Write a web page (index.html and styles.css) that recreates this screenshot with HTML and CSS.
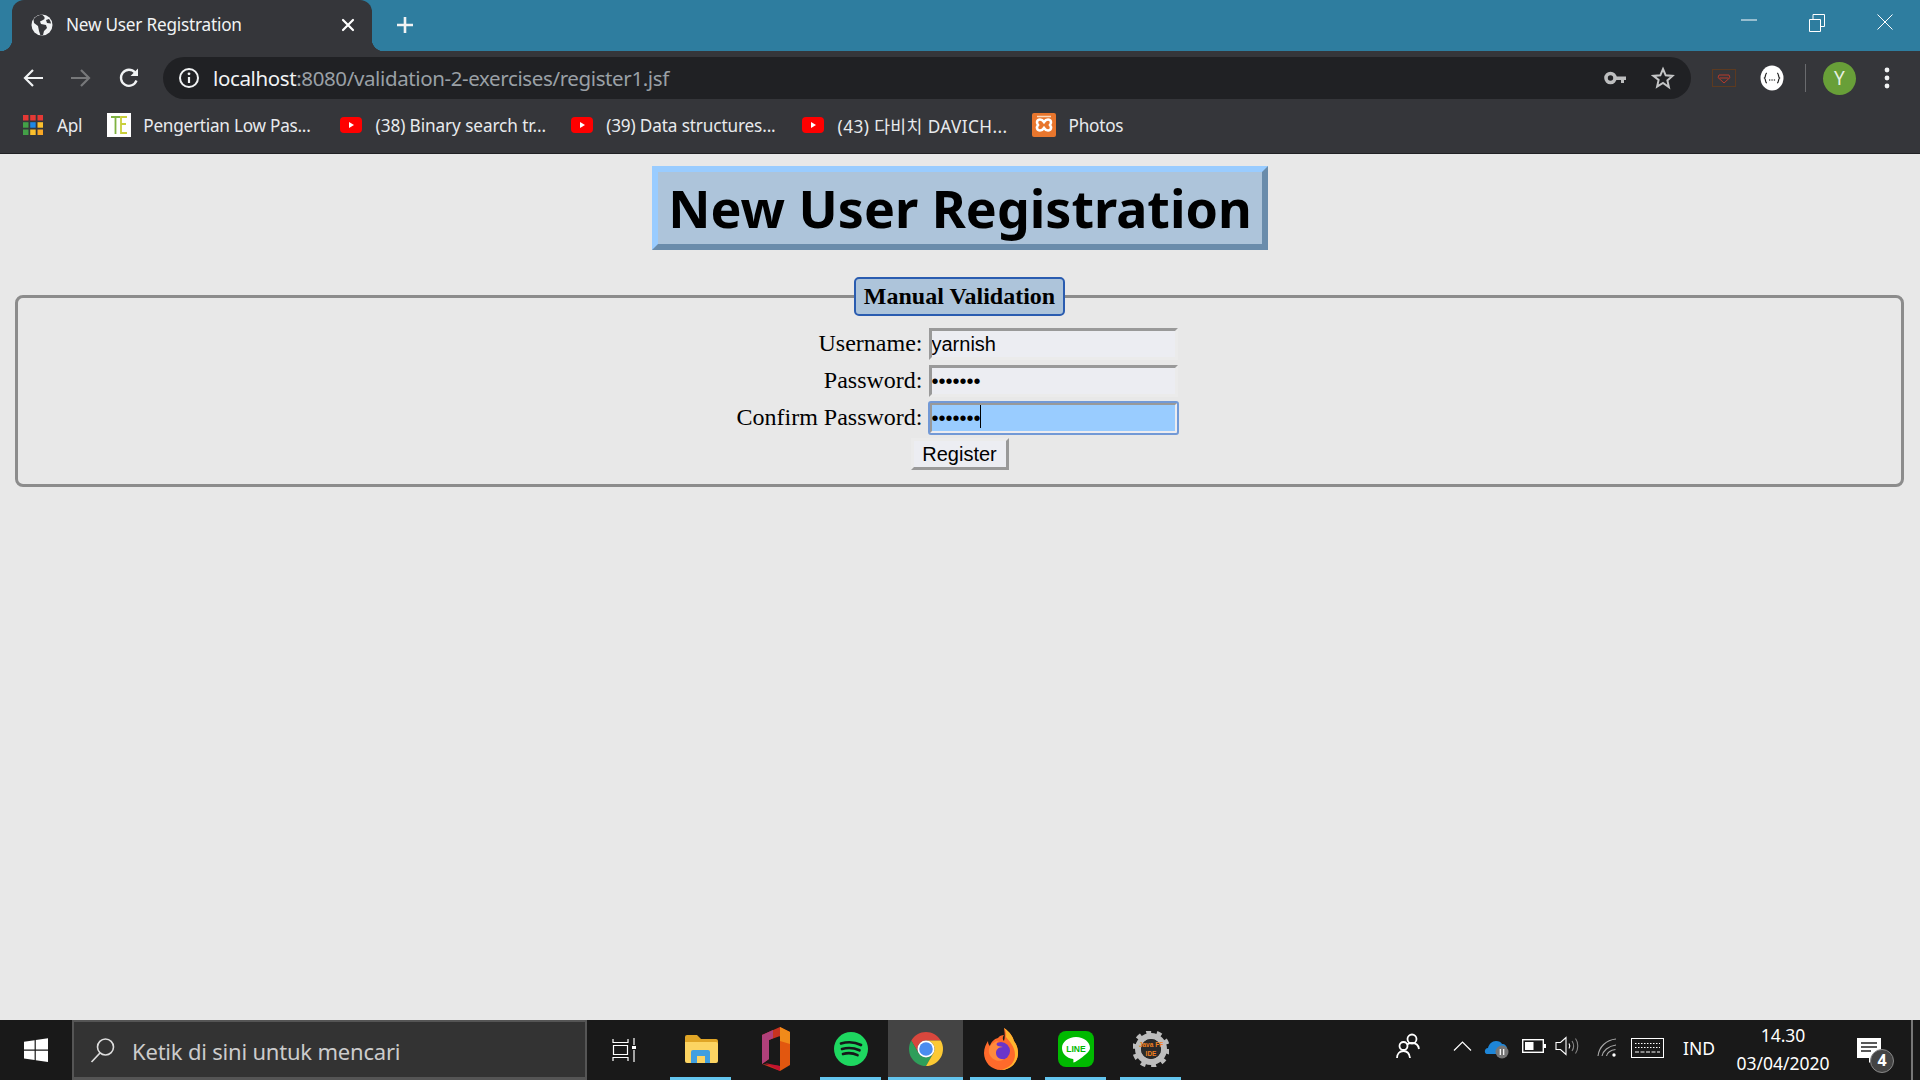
FILE: index.html
```html
<!DOCTYPE html>
<html lang="en">
<head>
<meta charset="utf-8">
<title>New User Registration</title>
<link rel="stylesheet" href="styles.css">
</head>
<body>
<header class="chrome">
  <div class="tabstrip">
    <div class="tab">
      <svg class="tab-globe" width="22" height="22" viewBox="0 0 22 22"><circle cx="11" cy="11" r="10.5" fill="#f1f3f4"/><path d="M11 .5C7 1 4 3 2.500 5.500L3 9l4 3 1 5 1.500 4.500L12 21l1-4 3-3-1-3-5-1-1-2.500L12 6l1.500-1V3L11 .5zM18 5l-3 1 1 3 4 .5c-.3-2-1-3.200-2-4.500z" fill="#35363a"/></svg>
      <span class="tab-title">New User Registration</span>
      <svg class="tab-close" width="14" height="14" viewBox="0 0 14 14"><path d="M2 2l10 10M12 2L2 12" stroke="#fff" stroke-width="2.200" stroke-linecap="round"/></svg>
    </div>
    <svg class="tab-new" width="20" height="20" viewBox="0 0 20 20"><path d="M10 2v16M2 10h16" stroke="#f1f3f4" stroke-width="2.600"/></svg>
    <div class="win-controls">
      <svg width="16" height="16" viewBox="0 0 16 16"><path d="M0 6h16" stroke="#fff" stroke-width="1"/></svg>
      <svg width="16" height="18" viewBox="0 0 16 18"><path d="M.5 5.500h11v12H.5zM4 5.500V.5h11.500v12H11.500" fill="none" stroke="#fff" stroke-width="1"/></svg>
      <svg width="16" height="16" viewBox="0 0 16 16"><path d="M.5.500l15 15M15.500.500l-15 15" stroke="#fff" stroke-width="1"/></svg>
    </div>
  </div>
  <div class="toolbar">
    <svg class="nav-icon" width="24" height="24" viewBox="0 0 24 24"><path d="M22 12H4M12 4l-8 8 8 8" fill="none" stroke="#f1f3f4" stroke-width="2.200"/></svg>
    <svg class="nav-icon" width="24" height="24" viewBox="0 0 24 24"><path d="M2 12h18M12 4l8 8-8 8" fill="none" stroke="#77787a" stroke-width="2.200"/></svg>
    <svg class="nav-icon" width="24" height="24" viewBox="0 0 24 24"><path d="M19.500 14.500A8 8 0 1 1 18 6.500" fill="none" stroke="#f1f3f4" stroke-width="2.300"/><path d="M21 2.500V10h-7.500z" fill="#f1f3f4"/></svg>
    <div class="omnibox">
      <svg class="info" width="22" height="22" viewBox="0 0 22 22"><circle cx="11" cy="11" r="9" fill="none" stroke="#f1f3f4" stroke-width="2"/><path d="M11 10v6" stroke="#f1f3f4" stroke-width="2.200"/><circle cx="11" cy="6.800" r="1.400" fill="#f1f3f4"/></svg>
      <span class="url"><span class="url-host">localhost</span>:8080/validation-2-exercises/register1.jsf</span>
      <svg class="omni-key" width="22" height="14" viewBox="0 0 22 14"><circle cx="6.500" cy="7" r="4.500" fill="none" stroke="#bdbebf" stroke-width="3.600"/><path d="M11 5.500h11v3.500h-2v3h-3V9h-6z" fill="#bdbebf"/></svg>
      <svg class="omni-star" width="24" height="24" viewBox="0 0 24 24"><path d="M12 3l2.700 6.300 6.800.6-5.100 4.500 1.500 6.700L12 17l-5.900 3.600 1.500-6.700L2.500 9.900l6.800-.6z" fill="none" stroke="#c4c5c6" stroke-width="2" stroke-linejoin="miter"/></svg>
    </div>
    <svg class="ext-red" width="24" height="18" viewBox="0 0 24 18"><rect x=".5" y=".5" width="23" height="17" fill="none" stroke="#5c3a20"/><path d="M7 6h10l1 2.500-6 5.500-6-5.500zM7.500 9h9" fill="none" stroke="#b83a2b" stroke-width="1"/></svg>
    <svg class="ext-json" width="24" height="26" viewBox="0 0 24 26"><ellipse cx="12" cy="13" rx="11.500" ry="12.500" fill="#fff"/><path d="M7 8c-2 0-1 4-2.500 5C6 14 5 18 7 18M17 8c2 0 1 4 2.500 5-1.500 1-.5 5-2.500 5" fill="none" stroke="#222" stroke-width="1.200"/><path d="M9 15h1.300M11.400 15h1.300M13.800 15h1.300" stroke="#555" stroke-width="1.300"/></svg>
    <span class="tool-sep"></span>
    <span class="avatar">Y</span>
    <svg class="menu-dots" width="6" height="24" viewBox="0 0 6 24"><circle cx="3" cy="4" r="2.400" fill="#f1f3f4"/><circle cx="3" cy="12" r="2.400" fill="#f1f3f4"/><circle cx="3" cy="20" r="2.400" fill="#f1f3f4"/></svg>
  </div>
  <nav class="bookmarks">
    <a class="bm bm-apps">
      <svg width="20" height="20" viewBox="0 0 20 20"><g fill="#e53935"><rect width="5.500" height="5.500"/><rect x="7.200" width="5.500" height="5.500"/><rect x="14.500" width="5.500" height="5.500"/></g><rect y="7.200" width="5.500" height="5.500" fill="#43a047"/><rect x="7.200" y="7.200" width="5.500" height="5.500" fill="#1e88e5"/><rect x="14.500" y="7.200" width="5.500" height="5.500" fill="#fbc02d"/><rect y="14.500" width="5.500" height="5.500" fill="#43a047"/><rect x="7.200" y="14.500" width="5.500" height="5.500" fill="#fbc02d"/><rect x="14.500" y="14.500" width="5.500" height="5.500" fill="#f9a825"/></svg>
      <span>Apl</span>
    </a>
    <a class="bm bm-te">
      <svg width="24" height="24" viewBox="0 0 24 24"><rect width="24" height="24" fill="#fff"/><path d="M4 4h9M8.500 4v17" fill="none" stroke="#7fb241" stroke-width="1.800"/><path d="M20 4h-6v16h6M14 11h5" fill="none" stroke="#c9cf3a" stroke-width="1.800"/></svg>
      <span>Pengertian Low Pas...</span>
    </a>
    <a class="bm bm-38">
      <svg width="22" height="16" viewBox="0 0 22 16"><rect width="22" height="16" rx="4" fill="#f00"/><path d="M9 5l5 3-5 3z" fill="#fff"/></svg>
      <span>(38) Binary search tr...</span>
    </a>
    <a class="bm bm-39">
      <svg width="22" height="16" viewBox="0 0 22 16"><rect width="22" height="16" rx="4" fill="#f00"/><path d="M9 5l5 3-5 3z" fill="#fff"/></svg>
      <span>(39) Data structures...</span>
    </a>
    <a class="bm bm-43">
      <svg width="22" height="16" viewBox="0 0 22 16"><rect width="22" height="16" rx="4" fill="#f00"/><path d="M9 5l5 3-5 3z" fill="#fff"/></svg>
      <span>(43) 다비치 DAVICH...</span>
    </a>
    <a class="bm bm-photos">
      <svg width="24" height="24" viewBox="0 0 24 24"><rect width="24" height="24" rx="2" fill="#e8762d"/><path d="M5 3.500h14" stroke="#fbd9bd" stroke-width="1.500"/><path d="M8 6.500c-3 0-4 3-2 5.500-2 2.500-1 5.500 2 5.500 2 0 3-1 4-2.500 1 1.500 2 2.500 4 2.500 3 0 4-3 2-5.500 2-2.500 1-5.500-2-5.500-2 0-3 1-4 2.500-1-1.500-2-2.500-4-2.500z" fill="none" stroke="#fff" stroke-width="2.600"/></svg>
      <span>Photos</span>
    </a>
  </nav>
</header>

<main class="page">
  <h1 class="page-title">New User Registration</h1>
  <fieldset class="panel">
    <legend class="panel-legend">Manual Validation</legend>
    <form class="reg-form">
      <label class="reg-label" for="u">Username:</label>
      <input class="reg-input" id="u" type="text" value="yarnish">
      <label class="reg-label" for="p">Password:</label>
      <input class="reg-input" id="p" type="password" value="abcdefg">
      <label class="reg-label" for="c">Confirm Password:</label>
      <span class="focus-wrap">
        <input class="reg-input reg-input-focus" id="c" type="password" value="abcdefg">
        <span class="caret"></span>
      </span>
      <button class="reg-button" type="button">Register</button>
    </form>
  </fieldset>
</main>

<footer class="taskbar">
  <div class="tb-start">
    <svg width="24" height="24" viewBox="0 0 24 24"><path d="M0 3.800l10.600-1.500v9.200H0zM11.800 2.100L24 .2v11.300H11.800zM0 12.700h10.600V22L0 20.400zM11.800 12.700H24V24l-12.200-1.800z" fill="#fff"/></svg>
  </div>
  <div class="tb-search">
    <svg width="26" height="26" viewBox="0 0 26 26"><circle cx="15.500" cy="10" r="8" fill="none" stroke="#ddd" stroke-width="1.600"/><path d="M10 16L1.500 25" stroke="#ddd" stroke-width="1.700"/></svg>
    <span>Ketik di sini untuk mencari</span>
  </div>
  <div class="tb-taskview">
    <svg width="24" height="24" viewBox="0 0 24 24"><path d="M1 1v3.500h15V1M1 23v-3.500h15V23M1.500 7.500h14v9h-14z" fill="none" stroke="#fff" stroke-width="1.200"/><path d="M22 0v7M22 12v12" stroke="#fff" stroke-width="1.200"/><rect x="20" y="8" width="4" height="3" fill="#fff"/></svg>
  </div>
  <div class="tb-app tb-open">
    <svg width="34" height="30" viewBox="0 0 34 30"><path d="M1 3a2 2 0 0 1 2-2h10l4 4h15a2 2 0 0 1 2 2v6H1z" fill="#e0a526"/><path d="M1 8h31a2 2 0 0 1 2 2v17a2 2 0 0 1-2 2H3a2 2 0 0 1-2-2z" fill="#fcd462"/><path d="M7 29V18a2 2 0 0 1 2-2h15a2 2 0 0 1 2 2v11h-5v-7h-8v7z" fill="#3f9fe0"/></svg>
  </div>
  <div class="tb-app">
    <svg width="28" height="44" viewBox="0 0 28 44"><path d="M0 8L18 0v44L0 37l18 2V9L7 13v19l-7 5z" fill="#c8331f"/><path d="M0 8l11-5v8.300L7 13v19l-7 5z" fill="#b0407a"/><path d="M18 0l10 5v33l-10 6z" fill="#e2570f"/><path d="M18 0l10 5v12l-10-3z" fill="#f08a1a"/><path d="M3 36l15 3v5z" fill="#c4122f"/></svg>
  </div>
  <div class="tb-app tb-open">
    <svg width="34" height="34" viewBox="0 0 34 34"><circle cx="17" cy="17" r="17" fill="#1ed760"/><path d="M7 11.500c7-2 14-1.500 20 1.500M8 17c6-1.700 12-1.200 17.500 1.300M9 22c5-1.300 10-1 14.500 1.100" fill="none" stroke="#16181a" stroke-width="2.700" stroke-linecap="round"/></svg>
  </div>
  <div class="tb-app tb-open tb-active">
    <svg width="34" height="36" viewBox="2 2 20 20"><path d="M3.340 7A10 10 0 0 1 20.660 7H12A5 5 0 0 0 7.670 14.500Z" fill="#d9473d"/><path d="M3.340 7A10 10 0 0 0 12 22L16.330 14.500A5 5 0 0 1 7.670 14.500Z" fill="#2f9e5a"/><path d="M20.660 7A10 10 0 0 1 12 22L16.330 14.500A5 5 0 0 0 12 7Z" fill="#fcc934"/><circle cx="12" cy="12" r="5" fill="#fff"/><circle cx="12" cy="12" r="4" fill="#4a8cf0"/></svg>
  </div>
  <div class="tb-app tb-open">
    <svg width="34" height="42" viewBox="0 0 34 42"><path d="M17 42C7 42 0 34 0 25c0-5 2-9 4-12 0 3 1 4 2 5 1-4 4-7 8-8 1-2 4-3 6-3-2 3-1 5 0 6 1-3 1-7 0-13 6 4 9 9 10 13 3 4 4 8 4 12 0 9-7 17-17 17z" fill="#ff6a2b"/><path d="M20 0c6 4 9 9 10 13 3 4 4 8 4 12 0 9-7 17-17 17 9-2 14-8 14-15 0-9-6-14-9-18 .5-3 0-6-2-9z" fill="#ffb52e"/><circle cx="17" cy="23" r="9" fill="#6a35c9"/><path d="M6 18c2-3 6-5 9-5-3 2-3 4-1 5l5 1c-5 0-7 3-7 6 0 4 4 7 9 6-6 4-14 1-16-6-.5-2 0-5 1-7z" fill="#ff8a3c"/></svg>
  </div>
  <div class="tb-app tb-open">
    <svg width="36" height="36" viewBox="0 0 36 36"><rect width="36" height="36" rx="8" fill="#00b900"/><path d="M18 6C10 6 4 11 4 17c0 5.500 4.500 10 11 11 1 .5 0 3 .5 3.500 1 .5 8-4.500 12-8 3-2.500 4.500-4.500 4.500-6.500C32 11 26 6 18 6z" fill="#fff"/><text class="line-word" x="18" y="21" text-anchor="middle">LINE</text></svg>
  </div>
  <div class="tb-app tb-open">
    <svg width="36" height="36" viewBox="0 0 36 36"><circle cx="18" cy="18" r="13" fill="none" stroke="#bdbdbd" stroke-width="6"/><circle cx="18" cy="18" r="17" fill="none" stroke="#bdbdbd" stroke-width="4" stroke-dasharray="5 5.680"/><circle cx="18" cy="18" r="10" fill="#2a2a2a"/><text class="jff-word" x="18" y="16" text-anchor="middle">Java FF</text><text class="jff-word" x="18" y="25" text-anchor="middle">IDE</text></svg>
  </div>
  <div class="tb-tray">
    <div class="tray tray-people"><svg width="24" height="26" viewBox="0 0 24 26"><circle cx="16" cy="6" r="4.500" fill="none" stroke="#fff" stroke-width="1.800"/><circle cx="7.500" cy="13" r="4" fill="none" stroke="#fff" stroke-width="1.800"/><path d="M1 25c0-4 2.500-7 6.500-7s6 3 6.500 7M11 11.500c1-1 3-1.500 5-1.500 4 0 6.500 2.500 7 6" fill="none" stroke="#fff" stroke-width="1.800"/></svg></div>
    <div class="tray tray-up"><svg width="19" height="10" viewBox="0 0 19 10"><path d="M1 9.500L9.500 1 18 9.500" fill="none" stroke="#fff" stroke-width="1.200"/></svg></div>
    <div class="tray tray-cloud"><svg width="26" height="22" viewBox="0 0 26 22"><path d="M3 17c-3 0-3-6 1-6 1-4 4-7 8-7 3 0 5 1 6 3 3 0 5 2 5 5v5z" fill="#1e86d8"/><circle cx="18" cy="15" r="6.500" fill="#777"/><path d="M16.300 12v6M19.700 12v6" stroke="#fff" stroke-width="1.200"/></svg></div>
    <div class="tray tray-batt"><svg width="24" height="14" viewBox="0 0 24 14"><rect x=".7" y=".7" width="20.600" height="12.600" fill="none" stroke="#fff" stroke-width="1.400"/><rect x="3" y="3" width="8.500" height="8" fill="#fff"/><rect x="22" y="5" width="2" height="4" fill="#fff"/></svg></div>
    <div class="tray tray-vol"><svg width="24" height="20" viewBox="0 0 24 20"><path d="M1 6.500h4.500L11 1.500v17l-5.500-5H1z" fill="none" stroke="#fff" stroke-width="1.100"/><path d="M14 7.500c1 1.500 1 3.500 0 5" fill="none" stroke="#fff" stroke-width="1.100"/><path d="M17 5c2 3 2 7 0 10M20.500 2.500c3 4 3 11 0 15" fill="none" stroke="#888" stroke-width="1.100"/></svg></div>
    <div class="tray tray-wifi"><svg width="20" height="19" viewBox="0 0 20 19"><path d="M1 18C2 9 9 2 19 1M5 18c1-5 6-10 14-11M9.500 18c.5-3 4-6 9-6.500" fill="none" stroke="#aaa" stroke-width="1.100"/><circle cx="17" cy="17" r="1.700" fill="#fff"/></svg></div>
    <div class="tray tray-kb"><svg width="33" height="20" viewBox="0 0 33 20"><rect x=".5" y=".5" width="32" height="19" fill="none" stroke="#fff"/><path d="M4 5.500h25M4 9.500h25" stroke="#fff" stroke-dasharray="1.500 1.500"/><path d="M4 14h25" stroke="#fff" stroke-dasharray="4 1.500"/></svg></div>
    <div class="tray tray-lang">IND</div>
    <div class="tray tray-clock"><span>14.30</span><span>03/04/2020</span></div>
    <div class="tray tray-notif">
      <svg width="40" height="38" viewBox="0 0 40 38"><path d="M0 0h24v20h-7l-5 5v-5H0z" fill="#fff"/><path d="M4 5h16M4 9h16M4 13h10" stroke="#222" stroke-width="1.300"/></svg>
      <span class="notif-badge">4</span>
    </div>
    <span class="tb-edge"></span>
  </div>
</footer>
</body>
</html>
```

FILE: styles.css
```css
* { box-sizing: border-box; }
html, body { height: 100%; }
body {
  margin: 0;
  height: 1080px;
  display: flex;
  flex-direction: column;
  overflow: hidden;
  background: #e8e8e8;
  font-family: "Liberation Serif", serif;
  color: #000;
}

/* browser chrome */
.chrome { flex: none; height: 154px; background: #35363a; border-bottom: 1px solid #202124; font-family: "Noto Sans", sans-serif; }
.tabstrip { height: 51px; background: #2e7d9f; display: flex; align-items: center; padding-left: 12px; }
.tab { position: relative; align-self: stretch; width: 360px; background: #35363a; border-radius: 12px 12px 0 0; display: flex; align-items: center; padding: 0 0 2px 19px; color: #f1f3f4; }
.tab::before, .tab::after { content: ""; position: absolute; bottom: 0; width: 12px; height: 12px; }
.tab::before { left: -12px; background: radial-gradient(circle at 0 0, transparent 12px, #35363a 12.500px); }
.tab::after { right: -12px; background: radial-gradient(circle at 100% 0, transparent 12px, #35363a 12.500px); }
.tab-title { margin-left: 13px; font-size: 17.200px; letter-spacing: -.22px; white-space: nowrap; }
.tab-close { margin-left: auto; margin-right: 17px; }
.tab-new { margin: 0 0 2px 23px; }
.win-controls { margin-left: auto; display: flex; align-items: flex-start; align-self: flex-start; gap: 52px; padding: 14px 27px 0 0; }

.toolbar { height: 54px; display: flex; align-items: center; padding: 0 0 0 21px; }
.nav-icon { margin-right: 24px; flex: none; }
.nav-icon:nth-child(3) { margin-right: 22px; }
.omnibox { width: 1528px; height: 42px; background: #202124; border-radius: 21px; display: flex; align-items: center; padding: 0 16px 0 15px; flex: none; }
.url { margin-left: 13px; font-size: 20.500px; letter-spacing: -.38px; color: #9aa0a6; white-space: nowrap; }
.url-host { color: #f1f3f4; }
.omni-key { margin-left: auto; margin-right: 25px; }
.ext-red { margin-left: 21px; flex: none; }
.ext-json { margin-left: 24px; flex: none; }
.tool-sep { width: 1px; height: 28px; background: #6a6b6e; margin-left: 21px; flex: none; }
.avatar { margin-left: 17px; width: 33px; height: 33px; border-radius: 50%; background: #689f38; color: #e8f0e0; font-size: 19px; display: flex; align-items: center; justify-content: center; flex: none; }
.menu-dots { margin-left: 28px; flex: none; }

.bookmarks { height: 48px; display: flex; align-items: center; padding: 0 0 8px 23px; font-size: 17.200px; letter-spacing: -.25px; color: #e8eaed; }
.bm { display: flex; align-items: center; gap: 12px; white-space: nowrap; font-family: "Noto Sans", "Noto Sans CJK KR", sans-serif; }
.bm-apps { gap: 14px; }
.bm-te { margin-left: 25px; }
.bm-38 { margin-left: 29px; gap: 14px; letter-spacing: -.09px; }
.bm-39 { margin-left: 25px; gap: 13px; letter-spacing: -.14px; }
.bm-43 { margin-left: 26px; gap: 14px; letter-spacing: .42px; }
.bm-photos { margin-left: 24px; gap: 13px; }

/* page */
.page { flex: 1; min-height: 0; padding-top: 12px; }
.page-title {
  width: fit-content;
  margin: 0 auto 27px;
  padding: 0 10.500px;
  height: 84px;
  line-height: 72px;
  font-family: "Noto Sans", sans-serif;
  font-weight: 700;
  font-size: 52px;
  background: #adc4da;
  border: 6px solid;
  border-color: #99ccff #6a8cab #6a8cab #99ccff;
}
.panel { margin: 0 16px 0 15px; min-width: 0; padding: 12px 0 14px; border: 3px solid #8c8c8c; border-radius: 8px; }
.panel-legend { margin: 0 auto; padding: 4px 8px; height: 39px; background: #adc4da; border: 2px solid #2a5cb0; border-radius: 5px; font-weight: 700; font-size: 24px; line-height: 27px; }
.reg-form { display: grid; grid-template-columns: auto auto; justify-content: center; column-gap: 6px; row-gap: 5px; padding-right: 5px; }
.reg-label { justify-self: end; align-self: center; margin-bottom: 2px; font-size: 24px; line-height: 30px; }
.reg-input { width: 249px; height: 32px; padding: 0; display: block; margin: 0; font-family: "Liberation Sans", sans-serif; font-size: 20px; color: #000; background: #ecedf2; border: 3px solid; border-color: #999 #ebebeb #ebebeb #999; border-radius: 0; }
.focus-wrap { position: relative; display: block; }
.reg-input-focus { background: #99ccff; outline: 2px solid #7299d6; outline-offset: -1px; border-radius: 2px; border-color: #999 #ececf0 #ececf0 #999; }
.caret { position: absolute; left: 51px; top: 3px; width: 1px; height: 23px; background: #000; }
.reg-button { grid-column: 1 / -1; justify-self: center; margin: -1px 0 0 5px; width: 98px; height: 32px; padding: 0; font-family: "Liberation Sans", sans-serif; font-size: 20px; color: #000; background: #ecedf2; border: 3px solid; border-color: #ebebeb #999 #999 #ebebeb; }

/* taskbar */
.taskbar { flex: none; height: 60px; background: #191919; display: flex; font-family: "Noto Sans", sans-serif; color: #fff; }
.tb-start { width: 72px; display: flex; align-items: center; justify-content: center; flex: none; }
.tb-search { width: 515px; flex: none; background: #333; border: 2px solid #555; border-bottom-width: 3px; display: flex; align-items: center; padding: 2px 0 0 16px; gap: 16px; font-size: 22px; letter-spacing: -.2px; color: #ccc; }
.tb-search svg { margin-top: -2px; }
.tb-taskview { width: 76px; flex: none; display: flex; align-items: center; padding-left: 25px; }
.tb-app { width: 75px; flex: none; display: flex; align-items: center; justify-content: center; position: relative; padding-bottom: 2px; }
.tb-open::after { content: ""; position: absolute; left: 7px; right: 7px; bottom: 0; height: 3px; background: #63c5ee; }
.tb-active { background: #444; }
.tb-active::after { left: 0; right: 0; }
.line-word { font: 700 8.500px "Liberation Sans", sans-serif; fill: #00b900; }
.jff-word { font: 700 6.500px "Liberation Sans", sans-serif; fill: #f08020; }
.tb-tray { margin-left: auto; display: flex; align-items: center; height: 100%; }
.tray { display: flex; align-items: center; justify-content: center; height: 100%; padding-bottom: 8px; flex: none; }
.tray-people { width: 86px; }
.tray-up { width: 22px; }
.tray-cloud { width: 48px; padding-bottom: 4px; }
.tray-batt { width: 26px; }
.tray-vol { width: 40px; }
.tray-wifi { width: 40px; padding-bottom: 6px; }
.tray-kb { width: 40px; padding-bottom: 5px; }
.tray-lang { width: 64px; font-size: 17.500px; padding-bottom: 4px; }
.tray-clock { width: 104px; flex-direction: column; font-size: 17.500px; padding: 0 0 2px; gap: 6px; line-height: 22px; }
.tray-notif { width: 76px; position: relative; padding: 18px 0 0 22px; align-items: flex-start; justify-content: flex-start; }
.notif-badge { position: absolute; left: 35px; top: 29px; width: 24px; height: 24px; border-radius: 50%; background: #444; border: 1.500px solid #888; font-size: 16px; font-weight: 700; line-height: 21px; text-align: center; }
.tb-edge { width: 2px; height: 100%; background: #777; margin-right: 7px; flex: none; }
```
